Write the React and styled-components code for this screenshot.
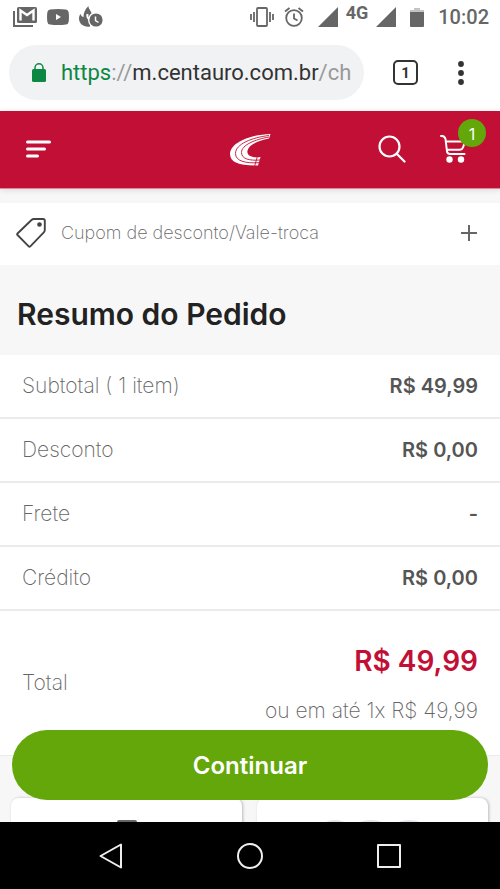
import React, { useState } from 'react'
import styled, { createGlobalStyle } from 'styled-components';

const GlobalStyle = createGlobalStyle`
  * {
    box-sizing: border-box;
  }

  body {
    margin: 0;
    background: #f7f7f7;
    font-family: Inter, "Liberation Sans", sans-serif;
  }

  button {
    margin: 0;
    padding: 0;
    border: 0;
    background: none;
    font: inherit;
    color: inherit;
    cursor: pointer;
  }

  svg {
    display: block;
    flex: none;
  }
`

const summary = [
  { label: 'Subtotal ( 1 item)', value: 'R$ 49,99' },
  { label: 'Desconto', value: 'R$ 0,00' },
  { label: 'Frete', value: '-' },
  { label: 'Crédito', value: 'R$ 0,00' },
]

const SignalIcon = () => (
  <svg width="20" height="20" viewBox="0 0 20 20" fill="#666">
    <path d="M20 0v20H0z" />
  </svg>
)

const StatusBar = () => (
  <Status>
    <StatusGroup $gap={10}>
      <svg width="24" height="20" viewBox="0 0 24 20" fill="none">
        <path d="M1 4v15h19" stroke="#666" strokeWidth="2" />
        <rect x="4" y="0" width="20" height="16" rx="1.500" fill="#666" />
        <path d="M7.500 13.500V3.500l6.500 4.500 6.500-4.500v10" stroke="#fff" strokeWidth="2.400" />
      </svg>
      <svg width="22" height="16" viewBox="0 0 22 16">
        <path d="M3 .6Q11-.5 19 .6q2.500.4 2.700 3 .5 4.400 0 8.800-.2 2.600-2.700 3-8 1.100-16 0-2.500-.4-2.700-3-.5-4.400 0-8.800Q.5 1 3 .6z" fill="#666" />
        <path d="M9 5v6l5-3z" fill="#fff" />
      </svg>
      <svg width="24" height="22" viewBox="0 0 24 22">
        <path d="M9.500 0c-.5 3 4 5.500 3.500 10.500L11 20.500C5 21.500 0 18 0 12.500 0 10.500.7 9 1.500 8c.7 2 1.700 3 3 3C4.500 7 6 3 9.500 0z" fill="#666" />
        <path d="M8.500 8c-.5 2.500 0 4 1.500 5" stroke="#fff" strokeWidth="2" fill="none" />
        <circle cx="17" cy="14" r="8" fill="#fff" />
        <circle cx="17" cy="14" r="6.600" fill="#666" />
        <path d="M16.500 10.500V14.500l3 2" stroke="#fff" strokeWidth="1.500" fill="none" />
      </svg>
    </StatusGroup>
    <StatusGroup $gap={14}>
      <StatusGroup $gap={10}>
        <svg width="24" height="20" viewBox="0 0 24 20" fill="none" stroke="#666" strokeWidth="1.800">
          <rect x="7" y="1" width="10" height="18" rx="1" />
          <path d="M1 7v6M4 5v10M20 5v10M23 7v6" />
        </svg>
        <svg width="20" height="20" viewBox="0 0 20 20" fill="none" stroke="#666" strokeWidth="1.800">
          <circle cx="10" cy="11" r="7.800" />
          <path d="M10 6.500V11.500l3.500 2M1 4.500L5.500 1M19 4.500L14.500 1" />
        </svg>
      </StatusGroup>
      <StatusGroup $gap={8}>
        <SignalIcon />
        <Network>4G</Network>
        <SignalIcon />
      </StatusGroup>
      <svg width="14" height="19" viewBox="0 0 14 19">
        <path d="M4 0h6v2h4v2H0V2h4z" fill="#c4c4c4" />
        <path d="M0 4h14v14q0 1-1 1H1q-1 0-1-1z" fill="#666" />
      </svg>
      <Clock>10:02</Clock>
    </StatusGroup>
  </Status>
)

const BrowserBar = () => (
  <Browser>
    <Address aria-label="Endereço">
      <svg width="14" height="19" viewBox="0 0 14 19">
        <path d="M3 8V4.800a4 4 0 0 1 8 0V8" fill="none" stroke="#0d8842" strokeWidth="1.500" />
        <rect y="6" width="14" height="13" rx="1.500" fill="#0d8842" />
      </svg>
      <Url>
        <Secure>https</Secure><Faded>://</Faded>m.centauro.com.br<Faded>/ch</Faded>
      </Url>
    </Address>
    <TabCount>1</TabCount>
    <MoreButton aria-label="Mais opções">
      <svg width="6" height="24" viewBox="0 0 6 24" fill="#333">
        <circle cx="3" cy="3" r="2.900" />
        <circle cx="3" cy="12" r="2.900" />
        <circle cx="3" cy="21" r="2.900" />
      </svg>
    </MoreButton>
  </Browser>
)

const Logo = () => (
  <svg width="42" height="34" viewBox="0 0 42 34" fill="none">
    <path d="M41.500 2C22 2.500 1.500 10 1 22 1 30.500 11 34 29 33.500L31.500 25C23 26 17.500 23.500 18.500 18.500 20 13 28 9 40 6.500z" fill="#fff" />
    <g stroke="#c10f35" strokeWidth=".9">
      <path d="M40 3.500C23 5.500 6.500 12 6.500 21.500c0 7.500 9.500 10 23.500 9.200" />
      <path d="M40 5C26 7.500 12.500 13 12.500 20.500c0 6.500 8 8.300 18.500 7.500" />
      <path d="M28.500 24L25.500 34.500" />
    </g>
  </svg>
)

const StoreHeader = ({ items }) => (
  <Header>
    <IconButton aria-label="Menu">
      <svg width="25" height="18" viewBox="0 0 25 18" stroke="#fff" strokeWidth="3" strokeLinecap="round">
        <path d="M1.500 2h22M1.500 9h17M1.500 16h10" />
      </svg>
    </IconButton>
    <a href="#inicio" aria-label="Centauro">
      <Logo />
    </a>
    <Actions>
      <IconButton aria-label="Buscar">
        <svg width="28" height="28" viewBox="0 0 28 28" fill="none" stroke="#fff" strokeWidth="2.200" strokeLinecap="round">
          <circle cx="11.500" cy="11.500" r="10" />
          <path d="M19 19l7.500 7.500" />
        </svg>
      </IconButton>
      <CartButton aria-label="Carrinho">
        <svg width="26" height="28" viewBox="0 0 26 28" fill="none" stroke="#fff" strokeWidth="2" strokeLinecap="round" strokeLinejoin="round">
          <path d="M1 1q3.500-.3 4.500 3L7 16.500q.5 2.500 3 2.500h14.500M6 6.500H25l-2 6q-.7 2-3 2.200H7" />
          <circle cx="9.500" cy="24.500" r="3.200" fill="#fff" stroke="none" />
          <circle cx="21" cy="24.500" r="3.200" fill="#fff" stroke="none" />
        </svg>
        <Badge>{items}</Badge>
      </CartButton>
    </Actions>
  </Header>
)

const App = () => {
  const [couponOpen, setCouponOpen] = useState(false)

  return (
    <Screen>
      <GlobalStyle />
      <StatusBar />
      <BrowserBar />
      <StoreHeader items={1} />

      <Content>
        <Coupon aria-expanded={couponOpen} onClick={() => setCouponOpen(!couponOpen)}>
          <svg width="30" height="30" viewBox="0 0 30 30" fill="none" stroke="#444" strokeWidth="1.900" strokeLinejoin="round">
            <path d="M1.500 15.500L15.500 2Q16.500 1 18 1h9q1.800 0 1.800 1.800V12q0 1.300-1 2.300L14.300 28.300q-.8.800-1.600 0L1.500 17q-.7-.8 0-1.500z" />
            <circle cx="23.500" cy="6.500" r="1.400" fill="#444" />
          </svg>
          <CouponText>Cupom de desconto/Vale-troca</CouponText>
          <svg width="18" height="18" viewBox="0 0 18 18" stroke="#666" strokeWidth="2">
            <path d="M9 1v16M1 9h16" />
          </svg>
        </Coupon>

        <Title>Resumo do Pedido</Title>

        <Summary>
          {summary.map(row => (
            <Row key={row.label}>
              <Label>{row.label}</Label>
              <Value>{row.value}</Value>
            </Row>
          ))}
          <TotalRow>
            <Label>Total</Label>
            <TotalValue>
              <Price>R$ 49,99</Price>
              <Installments>ou em até 1x R$ 49,99</Installments>
            </TotalValue>
          </TotalRow>
        </Summary>

        <Cards>
          <Card>
            <svg width="20" height="8" viewBox="0 0 20 8">
              <rect width="20" height="8" rx="2" fill="#666" />
            </svg>
          </Card>
          <Card>
            <svg width="104" height="8" viewBox="0 0 104 8" fill="#e3e5ec">
              <ellipse cx="14" cy="8" rx="14" ry="8" />
              <ellipse cx="50" cy="8" rx="16" ry="8" />
              <ellipse cx="88" cy="8" rx="16" ry="8" />
            </svg>
          </Card>
        </Cards>

        <ContinueButton>Continuar</ContinueButton>
      </Content>

      <SystemNav>
        <IconButton aria-label="Voltar">
          <svg width="24" height="26" viewBox="0 0 24 26" fill="none" stroke="#eee" strokeWidth="2" strokeLinejoin="round">
            <path d="M22 1.500v23L1.500 13z" />
          </svg>
        </IconButton>
        <IconButton aria-label="Início">
          <svg width="26" height="26" viewBox="0 0 26 26" fill="none" stroke="#eee" strokeWidth="2">
            <circle cx="13" cy="13" r="12" />
          </svg>
        </IconButton>
        <IconButton aria-label="Recentes">
          <svg width="24" height="24" viewBox="0 0 24 24" fill="none" stroke="#eee" strokeWidth="2" strokeLinejoin="round">
            <rect x="1" y="1" width="22" height="22" />
          </svg>
        </IconButton>
      </SystemNav>
    </Screen>
  )
}

export default App;

const Screen = styled.div`
  display: flex;
  flex-direction: column;
  height: 100vh;
  overflow: hidden;
`

const Status = styled.div`
  display: flex;
  flex: none;
  align-items: center;
  justify-content: space-between;
  height: 34px;
  padding: 0 11px 0 13px;
  background: #fff;
  color: #666;
  font-family: Roboto, sans-serif;
`

const StatusGroup = styled.div`
  display: flex;
  align-items: center;
  gap: ${props => props.$gap}px;
`

const Network = styled.span`
  padding-bottom: 8px;
  font-size: 18px;
  line-height: 20px;
  font-weight: 700;
`

const Clock = styled.span`
  font-size: 20px;
  line-height: 24px;
  font-weight: 500;
`

const Browser = styled.div`
  display: flex;
  flex: none;
  align-items: center;
  height: 77px;
  padding: 0 36px 0 9px;
  background: #fff;
  color: #333;
  font-family: Roboto, sans-serif;
`

const Address = styled.button`
  display: flex;
  flex: 1;
  min-width: 0;
  align-items: center;
  gap: 15px;
  height: 55px;
  padding: 0 8px 0 23px;
  border-radius: 28px;
  background: #f1f2f4;
`

const Url = styled.span`
  overflow: hidden;
  font-size: 22px;
  line-height: 30px;
  white-space: nowrap;
`

const Secure = styled.span`
  color: #0d8842;
`

const Faded = styled.span`
  color: #999;
`

const TabCount = styled.button`
  width: 25px;
  height: 25px;
  margin: 0 40px 0 29px;
  border: 2px solid #333;
  border-radius: 5px;
  font-size: 15px;
  line-height: 20px;
  font-weight: 700;
`

const MoreButton = styled.button`
  flex: none;
`

const Header = styled.header`
  display: grid;
  flex: none;
  grid-template-columns: 1fr auto 1fr;
  align-items: center;
  height: 78px;
  padding: 0 26px 1px;
  border-bottom: 1px solid #dd8a9b;
  background: #c10f35;
  box-shadow: 0 1px 6px rgba(0, 0, 0, 0.12);
  z-index: 1;
`

const IconButton = styled.button`
  display: flex;
  align-items: center;
  justify-self: start;

  nav & {
    justify-self: center;
  }
`

const Actions = styled.div`
  display: flex;
  align-items: center;
  justify-content: flex-end;
  gap: 34px;
  padding-right: 8px;
`

const CartButton = styled(IconButton)`
  position: relative;
`

const Badge = styled.span`
  position: absolute;
  top: -16px;
  right: -20px;
  width: 28px;
  height: 28px;
  border-radius: 50%;
  background: #63a70a;
  color: #fff;
  font-size: 16px;
  line-height: 30px;
  text-align: center;
`

const Content = styled.main`
  position: relative;
  flex: 1;
  min-height: 0;
  padding-top: 14px;
  overflow: hidden;
`

const Coupon = styled.button`
  display: flex;
  align-items: center;
  width: 100%;
  height: 62px;
  padding: 0 22px 2px 16px;
  gap: 15px;
  background: #fff;
  color: #666;
  text-align: left;
`

const CouponText = styled.span`
  flex: 1;
  font-size: 18px;
  line-height: 24px;
  font-weight: 200;
`

const Title = styled.h1`
  margin: 0;
  padding: 33px 17px 25px;
  color: #222;
  font-size: 30px;
  line-height: 32px;
  font-weight: 600;
`

const Summary = styled.dl`
  margin: 0;
  background: #fff;
`

const Row = styled.div`
  display: flex;
  align-items: center;
  justify-content: space-between;
  height: 64px;
  padding: 0 22px;
  border-bottom: 2px solid #ebebeb;
`

const TotalRow = styled(Row)`
  height: 145px;
  border-bottom-width: 1px;
`

const Label = styled.dt`
  color: #666;
  font-size: 21px;
  line-height: 24px;
  font-weight: 200;
`

const Value = styled.dd`
  margin: 0;
  color: #555;
  font-size: 20px;
  line-height: 24px;
  font-weight: 600;
`

const TotalValue = styled.dd`
  margin: 0;
  text-align: right;
`

const Price = styled.div`
  color: #c10f35;
  font-size: 28px;
  line-height: 36px;
  font-weight: 600;
`

const Installments = styled.div`
  padding-top: 20px;
  color: #666;
  font-size: 21px;
  line-height: 24px;
  font-weight: 200;
`

const Cards = styled.div`
  display: grid;
  grid-template-columns: 1fr 1fr;
  gap: 15px;
  padding: 42px 12px 0 11px;
`

const Card = styled.div`
  display: flex;
  justify-content: center;
  height: 120px;
  padding-top: 22px;
  border-radius: 8px;
  background: #fff;
  box-shadow: 1px 0 3px rgba(0, 0, 0, 0.25);
`

const ContinueButton = styled.button`
  position: absolute;
  right: 12px;
  bottom: 22px;
  left: 12px;
  height: 70px;
  border-radius: 35px;
  background: #63a70a;
  color: #fff;
  font-size: 24px;
  font-weight: 600;
`

const SystemNav = styled.nav`
  display: grid;
  flex: none;
  grid-template-columns: repeat(3, 1fr);
  align-items: center;
  height: 67px;
  padding: 0 41px;
  background: #000;
`
